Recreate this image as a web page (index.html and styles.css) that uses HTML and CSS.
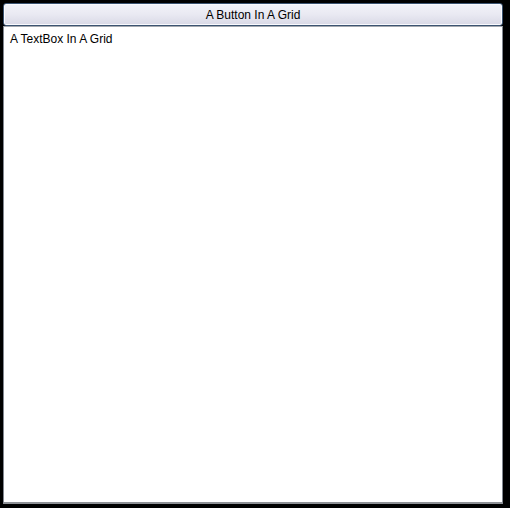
FILE: index.html
```
<!DOCTYPE html>
<html>
<head>
<meta charset="utf-8">
<link rel="stylesheet" href="styles.css">
</head>
<body>
<div class="grid">
  <button class="btn">A Button In A Grid</button>
  <div class="textbox">A TextBox In A Grid</div>
</div>
</body>
</html>
```
FILE: styles.css
```
html, body {
  margin: 0;
  padding: 0;
  background: #000;
  width: 510px;
  height: 508px;
  overflow: hidden;
}
.grid {
  display: grid;
  grid-template-rows: 23px 1fr;
  gap: 0;
  padding: 3px 7px 4px 3px;
  height: 508px;
  box-sizing: border-box;
  font-family: "Liberation Sans", Arial, sans-serif;
  font-size: 12px;
}
.btn {
  margin: 0;
  border: 1px solid #3c5472;
  border-radius: 3px;
  background: linear-gradient(#f3f3f9 0%, #e9e9f2 50%, #d9d9e6 100%);
  box-shadow: inset 0 0 0 1px #fafafe;
  font-family: inherit;
  font-size: 12px;
  color: #000;
  padding: 0;
  line-height: 20px;
}
.textbox {
  background: #fff;
  border: 1px solid #828790;
  border-top-color: #a5a9b0;
  border-bottom: 2px solid #8e9196;
  padding: 4px 6px;
  color: #000;
  line-height: 16px;
}
```
